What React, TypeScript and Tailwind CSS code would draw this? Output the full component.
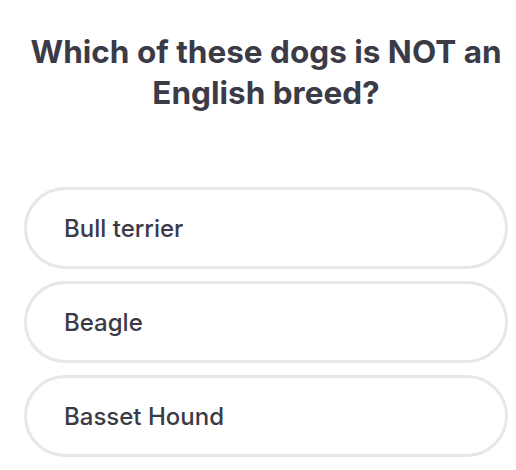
export default function App() {
  const options = ["Bull terrier", "Beagle", "Basset Hound"];
  return (
    <div
      className="w-[516px] h-[470px] bg-white overflow-hidden text-[#3b3b48]"
      style={{ fontFamily: "Inter, 'Noto Sans', sans-serif" }}
    >
      <h1 className="pt-[31px] pl-[28px] pr-3 text-center text-[31.5px] leading-[41px] font-bold">
        Which of these dogs is NOT an
        <br />
        English breed?
      </h1>
      <div className="mt-[74px] pl-6 pr-2 flex flex-col gap-[12px]">
        {options.map((o) => (
          <div
            key={o}
            className="h-[82px] rounded-full border-[3px] border-[#e7e7e7] flex items-center pl-[37px] pt-[2px] text-[24px] font-medium"
          >
            {o}
          </div>
        ))}
      </div>
    </div>
  );
}
